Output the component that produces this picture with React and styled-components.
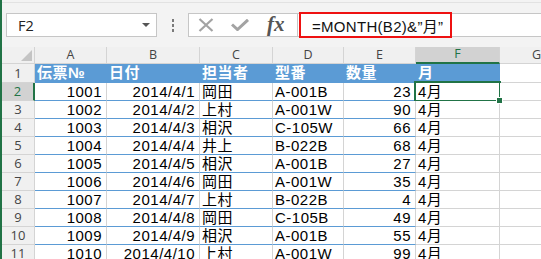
import React from 'react';
import styled, { createGlobalStyle } from 'styled-components';

const GlobalStyle = createGlobalStyle`
  body {
    margin: 0;
    background: #ffffff;
    overflow: hidden;
  }
`;

const Window = styled.div`
  width: 541px;
  height: 259px;
  box-sizing: border-box;
  border-left: 2px solid #217346;
  display: flex;
  flex-direction: column;
  overflow: hidden;
  background: #ffffff;
`;

const Toolbar = styled.div`
  height: 47px;
  flex: none;
  box-sizing: border-box;
  padding: 13px 0 0 4px;
  display: flex;
  align-items: flex-start;
  background: linear-gradient(#f3f3f3 0 2px, #e2e2e2 2px 3px, #f3f3f3 3px);
`;

const NameBox = styled.div`
  width: 151px;
  height: 24px;
  box-sizing: border-box;
  background: #ffffff;
  border: 1px solid #c6c6c6;
  display: flex;
  align-items: center;
  justify-content: space-between;
  padding: 0 6px 0 11px;
  font-family: "Open Sans", "Liberation Sans", sans-serif;
  font-size: 14.5px;
  color: #222222;
`;

const Caret = styled.span`
  width: 0;
  height: 0;
  border-left: 4px solid transparent;
  border-right: 4px solid transparent;
  border-top: 4px solid #555555;
`;

const Dots = styled.div`
  width: 31px;
  height: 24px;
  display: flex;
  flex-direction: column;
  align-items: center;
  justify-content: center;
  gap: 2px;

  span {
    width: 2px;
    height: 3px;
    background: #7a7a7a;
  }
`;

const FormulaBox = styled.div`
  flex: 1;
  height: 24px;
  box-sizing: border-box;
  border: 1px solid #c6c6c6;
  border-right: none;
  background: #ffffff;
  display: flex;
`;

const IconGroup = styled.div`
  width: 109px;
  flex: none;
  box-sizing: border-box;
  border-right: 1px solid #c6c6c6;
  display: flex;
  align-items: center;
  padding-left: 9px;
  gap: 17px;
  background: #ffffff;
`;

const Fx = styled.span`
  font-family: "Liberation Serif", "DejaVu Serif", serif;
  font-style: italic;
  font-weight: bold;
  font-size: 21px;
  color: #555555;
  line-height: 1;
  margin-top: -2px;
  margin-left: 1px;
`;

const Entry = styled.div`
  flex: 1;
  display: flex;
  align-items: center;
  padding-left: 1px;
`;

const Highlight = styled.div`
  height: 26px;
  width: 153px;
  box-sizing: border-box;
  border: 2px solid #ee1111;
  display: flex;
  align-items: center;
  padding-left: 11px;
  font-family: "Liberation Sans", "Noto Sans CJK JP", sans-serif;
  font-size: 15px;
  letter-spacing: 0.3px;
  color: #111111;
  white-space: nowrap;
`;

const Grid = styled.div`
  display: grid;
  grid-template-columns: 33px 72px 93px 73px 71px 72px 84px 1fr;
  grid-template-rows: 17px 19px;
  grid-auto-rows: 18px;
  font-family: "Liberation Sans", "Noto Sans CJK JP", sans-serif;
  font-size: 15px;
`;

const ColHead = styled.div`
  box-sizing: border-box;
  background: ${p => (p.$active ? '#d2d2d2' : '#f0f0f0')};
  border-right: 1px solid #d4d4d4;
  border-bottom: ${p => (p.$active ? '2px solid #217346' : '1px solid #d4d4d4')};
  color: ${p => (p.$active ? '#217346' : '#444444')};
  font-family: "Open Sans", "Liberation Sans", sans-serif;
  font-size: 12.5px;
  display: flex;
  align-items: center;
  justify-content: ${p => (p.$edge ? 'flex-start' : 'center')};
  padding-left: ${p => (p.$edge ? '32px' : '0')};
  line-height: 1;
`;

const Corner = styled.div`
  box-sizing: border-box;
  background: #f0f0f0;
  border-right: 1px solid #d4d4d4;
  border-bottom: 1px solid #d4d4d4;
  display: flex;
  align-items: flex-end;
  justify-content: flex-end;
  padding: 0 2px 2px 0;

  &::after {
    content: "";
    width: 0;
    height: 0;
    border-left: 11px solid transparent;
    border-bottom: 11px solid #c4c4c4;
  }
`;

const RowHead = styled.div`
  box-sizing: border-box;
  background: ${p => (p.$active ? '#d2d2d2' : '#f0f0f0')};
  border-right: ${p => (p.$active ? '2px solid #217346' : '1px solid #d4d4d4')};
  border-bottom: 1px solid #d4d4d4;
  color: ${p => (p.$active ? '#217346' : '#444444')};
  font-family: "Open Sans", "Liberation Sans", sans-serif;
  font-size: 13px;
  display: flex;
  align-items: center;
  justify-content: center;
  line-height: 1;
`;

const Cell = styled.div`
  position: relative;
  box-sizing: border-box;
  background: ${p => (p.$head ? '#5b9bd5' : '#ffffff')};
  border-right: 1px solid ${p => (p.$head ? '#5b9bd5' : '#d4d4d4')};
  border-bottom: 1px solid ${p => (p.$head || p.$table ? '#5b9bd5' : '#d4d4d4')};
  color: ${p => (p.$head ? '#ffffff' : '#000000')};
  font-weight: ${p => (p.$head ? 'bold' : 'normal')};
  text-align: ${p => (p.$right ? 'right' : 'left')};
  padding: ${p => (p.$right ? '0 4px 0 0' : '0 0 0 2px')};
  letter-spacing: 0.5px;
  line-height: 17px;
  white-space: nowrap;
  overflow: ${p => (p.$selected ? 'visible' : 'hidden')};

  ${p => p.$selected && `
    &::after {
      content: "";
      position: absolute;
      top: -2px;
      left: -2px;
      right: -2px;
      bottom: -2px;
      border: 2px solid #217346;
      pointer-events: none;
    }
    &::before {
      content: "";
      position: absolute;
      right: -4px;
      bottom: -4px;
      width: 5px;
      height: 5px;
      background: #217346;
      border: 1px solid #ffffff;
      z-index: 1;
    }
  `}
`;

const columns = ['A', 'B', 'C', 'D', 'E', 'F', 'G'];
const headers = ['伝票№', '日付', '担当者', '型番', '数量', '月'];

const rows = [
  [1001, '2014/4/1', '岡田', 'A-001B', 23],
  [1002, '2014/4/2', '上村', 'A-001W', 90],
  [1003, '2014/4/3', '相沢', 'C-105W', 66],
  [1004, '2014/4/4', '井上', 'B-022B', 68],
  [1005, '2014/4/5', '相沢', 'A-001B', 27],
  [1006, '2014/4/6', '岡田', 'A-001W', 35],
  [1007, '2014/4/7', '上村', 'B-022B', 4],
  [1008, '2014/4/8', '岡田', 'C-105B', 49],
  [1009, '2014/4/9', '相沢', 'A-001B', 55],
  [1010, '2014/4/10', '上村', 'A-001W', 99],
];

const CancelIcon = () => (
  <svg width="16" height="14" viewBox="0 0 16 14">
    <path d="M1.5 1 L14.5 13 M14.5 1 L1.5 13" stroke="#a3a3a3" strokeWidth="2.2" fill="none" />
  </svg>
);

const EnterIcon = () => (
  <svg width="18" height="12" viewBox="0 0 18 12">
    <path d="M1 5.5 L6.5 10.5 L17 0.8" stroke="#a3a3a3" strokeWidth="3" fill="none" />
  </svg>
);

const App = () => {
  return (
    <>
      <GlobalStyle />
      <Window>
        <Toolbar>
          <NameBox>
            <span>F2</span>
            <Caret />
          </NameBox>
          <Dots>
            <span />
            <span />
            <span />
          </Dots>
          <FormulaBox>
            <IconGroup>
              <CancelIcon />
              <EnterIcon />
              <Fx>fx</Fx>
            </IconGroup>
            <Entry>
              <Highlight>=MONTH(B2)&amp;”月”</Highlight>
            </Entry>
          </FormulaBox>
        </Toolbar>

        <Grid>
          <Corner />
          {columns.map(c => (
            <ColHead key={c} $active={c === 'F'} $edge={c === 'G'}>{c}</ColHead>
          ))}

          <RowHead>1</RowHead>
          {headers.map(h => (
            <Cell key={h} $head>{h}</Cell>
          ))}
          <Cell />

          {rows.map((r, i) => {
            const n = i + 2;
            return (
              <React.Fragment key={n}>
                <RowHead $active={n === 2}>{n}</RowHead>
                <Cell $table $right>{r[0]}</Cell>
                <Cell $table $right>{r[1]}</Cell>
                <Cell $table>{r[2]}</Cell>
                <Cell $table>{r[3]}</Cell>
                <Cell $table $right>{r[4]}</Cell>
                <Cell $selected={n === 2}>4月</Cell>
                <Cell />
              </React.Fragment>
            );
          })}
        </Grid>
      </Window>
    </>
  );
};

export default App;
